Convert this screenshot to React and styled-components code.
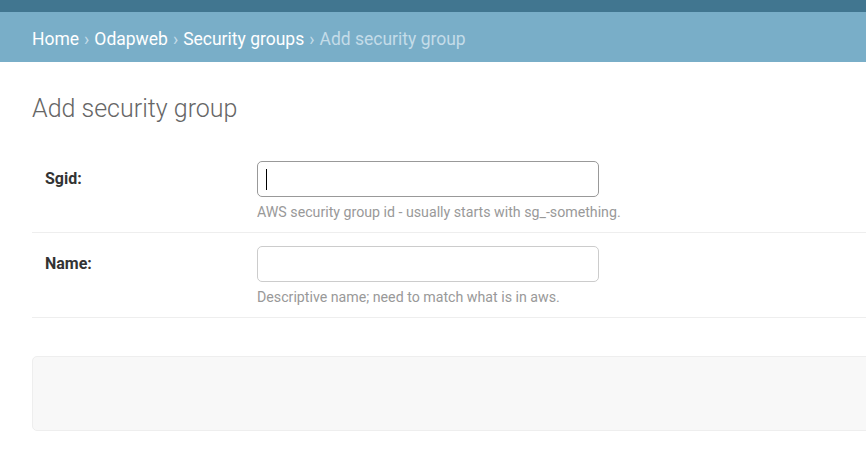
import React from "react";
import styled, { createGlobalStyle } from "styled-components";

const GlobalStyle = createGlobalStyle`
  html, body {
    margin: 0;
    padding: 0;
    background: #fff;
    overflow: hidden;
  }
  body {
    font-family: Roboto, "Liberation Sans", Arial, sans-serif;
    color: #333;
  }
`;

const Page = styled.div`
  width: 1100px;
`;

const TopBar = styled.div`
  height: 12px;
  background: #417690;
`;

const Breadcrumbs = styled.div`
  height: 50px;
  box-sizing: border-box;
  background: #79aec8;
  padding: 3px 32px 0;
  display: flex;
  align-items: center;
  font-size: 17.5px;
  color: #c4dce8;
`;

const Crumb = styled.a`
  color: ${(p) => (p.$current ? "#c4dce8" : "#fff")};
  text-decoration: none;
`;

const Sep = styled.span`
  color: #c4dce8;
  margin: 0 5px;
`;

const Content = styled.div`
  padding: 31px 0 0 32px;
`;

const Title = styled.h1`
  margin: 0 0 23px;
  font-size: 25px;
  font-weight: 300;
  color: #666;
  line-height: 32px;
`;

const FormRow = styled.div`
  display: flex;
  padding: 13px 0 10px;
  border-bottom: 1px solid #eee;
`;

const Label = styled.label`
  width: 212px;
  padding-left: 13px;
  font-weight: 700;
  font-size: 16px;
  color: #333;
  line-height: 36px;
  flex-shrink: 0;
`;

const Field = styled.div`
  display: flex;
  flex-direction: column;
`;

const InputWrap = styled.div`
  position: relative;
`;

const Input = styled.input`
  display: block;
  box-sizing: border-box;
  width: 342px;
  height: 36px;
  border: 1px solid ${(p) => (p.$focused ? "#999" : "#ccc")};
  border-radius: 5px;
  padding: 6px 8px;
  font-family: inherit;
  font-size: 16px;
  outline: none;
  background: #fff;
  caret-color: transparent;
`;

const Caret = styled.span`
  position: absolute;
  left: 9px;
  top: 8px;
  width: 1px;
  height: 21px;
  background: #000;
`;

const Help = styled.div`
  margin-top: 5px;
  font-size: 14.2px;
  color: #999;
  line-height: 20px;
`;

const SubmitRow = styled.div`
  margin-top: 38px;
  height: 75px;
  box-sizing: border-box;
  background: #f8f8f8;
  border: 1px solid #eee;
  border-radius: 5px;
`;

export default function App() {
  return (
    <Page>
      <GlobalStyle />
      <TopBar />
      <Breadcrumbs>
        <Crumb href="#">Home</Crumb>
        <Sep>›</Sep>
        <Crumb href="#">Odapweb</Crumb>
        <Sep>›</Sep>
        <Crumb href="#">Security groups</Crumb>
        <Sep>›</Sep>
        <Crumb $current>Add security group</Crumb>
      </Breadcrumbs>
      <Content>
        <Title>Add security group</Title>
        <form>
          <FormRow>
            <Label htmlFor="id_sgid">Sgid:</Label>
            <Field>
              <InputWrap>
                <Input id="id_sgid" $focused />
                <Caret />
              </InputWrap>
              <Help>AWS security group id - usually starts with sg_-something.</Help>
            </Field>
          </FormRow>
          <FormRow>
            <Label htmlFor="id_name">Name:</Label>
            <Field>
              <Input id="id_name" />
              <Help>Descriptive name; need to match what is in aws.</Help>
            </Field>
          </FormRow>
          <SubmitRow />
        </form>
      </Content>
    </Page>
  );
}
